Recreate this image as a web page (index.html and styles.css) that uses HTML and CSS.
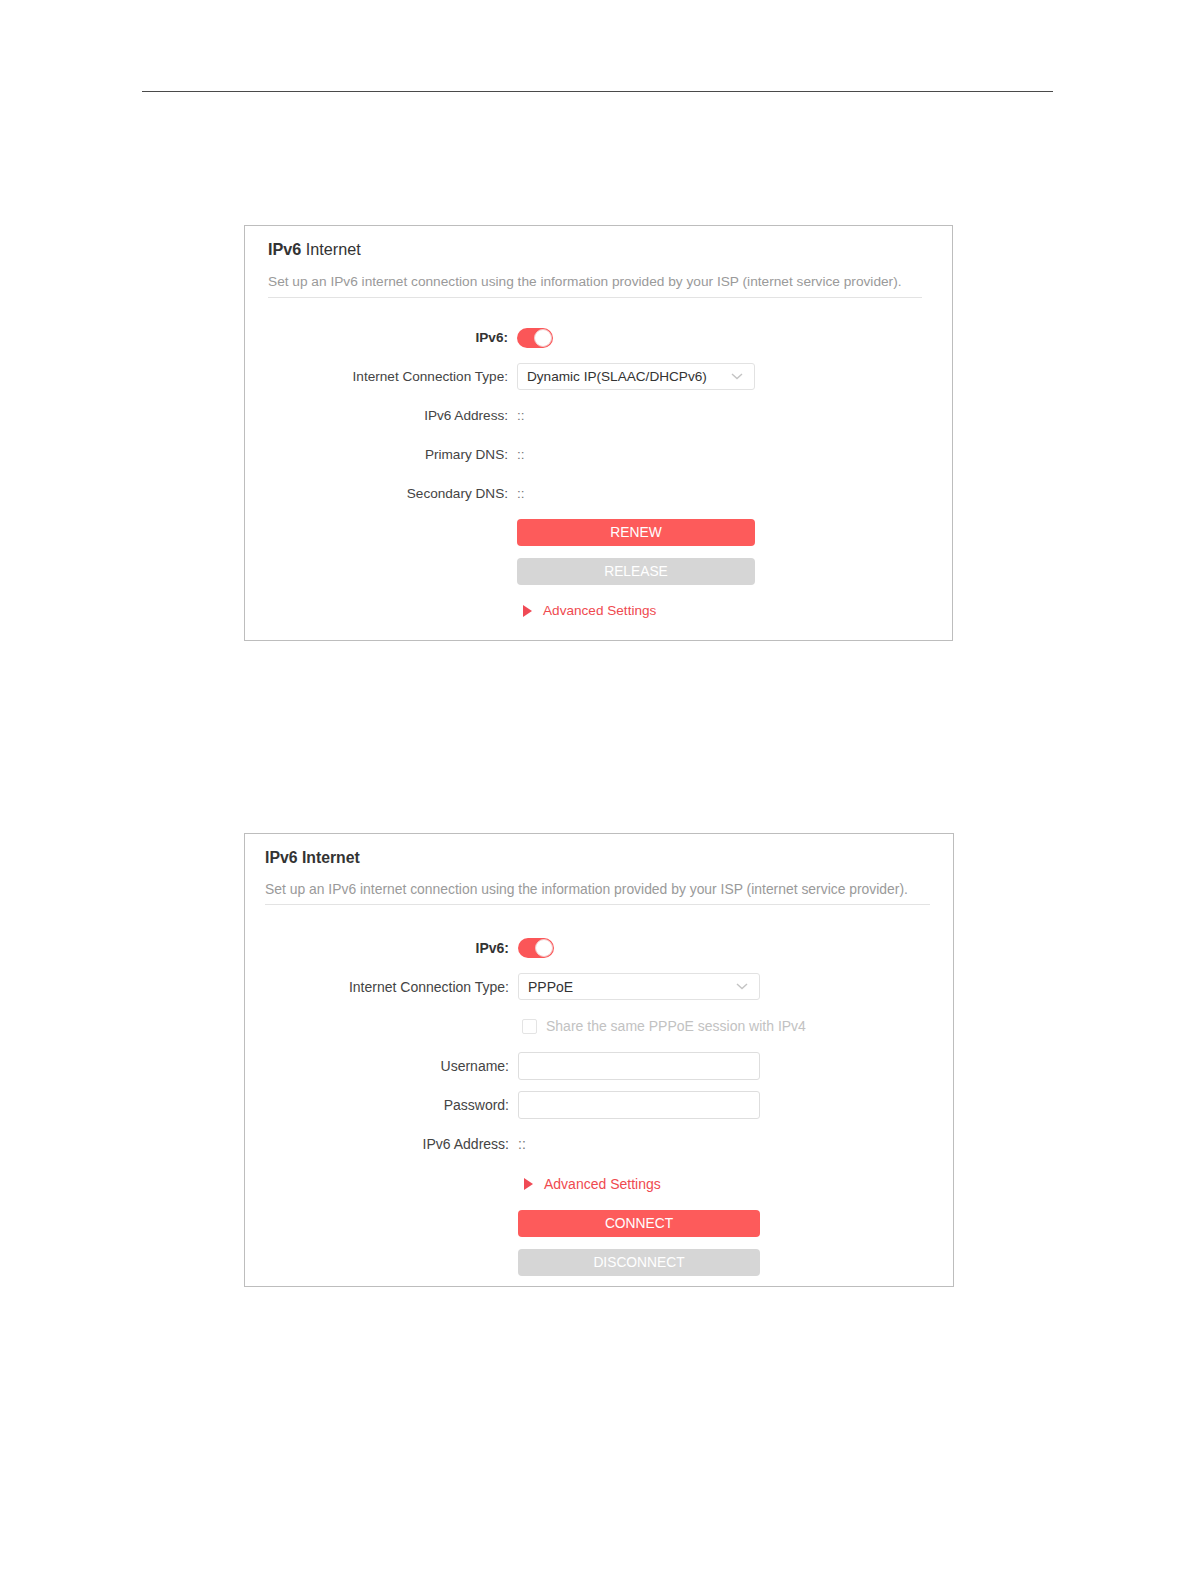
FILE: index.html
```html
<!DOCTYPE html>
<html lang="en">
  <head>
    <meta charset="UTF-8" />
    <meta name="viewport" content="width=device-width, initial-scale=1.0" />
    <title>IPv6 Internet</title>
    <link rel="stylesheet" href="styles.css">
  </head>
  <body>
    <div class="page">
      <div class="rule"></div>

      <!-- Dynamic IP panel -->
      <section class="panel panel-dynamic">
        <h2 class="panel-title"><b>IPv6</b> Internet</h2>
        <p class="panel-desc">Set up an IPv6 internet connection using the information provided by your ISP (internet service provider).</p>
        <div class="form">
          <span class="label label-strong">IPv6:</span>
          <span class="toggle"><span class="knob"></span></span>

          <span class="label">Internet Connection Type:</span>
          <div class="select">
            <span>Dynamic IP(SLAAC/DHCPv6)</span>
            <svg class="chevron" width="12" height="7" viewBox="0 0 12 7"><path d="M1 1l5 4.5L11 1" fill="none" stroke="#c4c4c4" stroke-width="1.4"/></svg>
          </div>

          <span class="label">IPv6 Address:</span>
          <span class="value">::</span>

          <span class="label">Primary DNS:</span>
          <span class="value">::</span>

          <span class="label">Secondary DNS:</span>
          <span class="value">::</span>

          <button class="btn btn-primary span2">RENEW</button>
          <button class="btn btn-disabled span2">RELEASE</button>

          <a class="advanced span2" href="#"><span class="arrow"></span>Advanced Settings</a>
        </div>
      </section>

      <!-- PPPoE panel -->
      <section class="panel panel-pppoe">
        <h2 class="panel-title">IPv6 Internet</h2>
        <p class="panel-desc">Set up an IPv6 internet connection using the information provided by your ISP (internet service provider).</p>
        <div class="form">
          <span class="label label-strong">IPv6:</span>
          <span class="toggle"><span class="knob"></span></span>

          <span class="label">Internet Connection Type:</span>
          <div class="select">
            <span>PPPoE</span>
            <svg class="chevron" width="12" height="7" viewBox="0 0 12 7"><path d="M1 1l5 4.5L11 1" fill="none" stroke="#c4c4c4" stroke-width="1.4"/></svg>
          </div>

          <label class="check span2"><span class="box"></span>Share the same PPPoE session with IPv4</label>

          <span class="label">Username:</span>
          <input class="input" type="text" />

          <span class="label">Password:</span>
          <input class="input" type="password" />

          <span class="label">IPv6 Address:</span>
          <span class="value">::</span>

          <a class="advanced span2" href="#"><span class="arrow"></span>Advanced Settings</a>

          <button class="btn btn-primary span2">CONNECT</button>
          <button class="btn btn-disabled span2">DISCONNECT</button>
        </div>
      </section>
    </div>
  </body>
</html>
```

FILE: styles.css
```css
body {
  margin: 0;
  background: #fff;
  font-family: "Liberation Sans", Arial, sans-serif;
  color: #333;
}
.page {
  width: 911px;
  padding: 91px 0 200px 142px;
}
.rule {
  border-top: 1px solid #4a4a4a;
}

/* Settings panel */
.panel {
  margin-left: 102px;
  border: 1px solid #bdbdbd;
  box-sizing: border-box;
}
.panel-dynamic {
  width: 709px;
  margin-top: 133px;
  padding: 14px 30px 16px 23px;
}
.panel-pppoe {
  width: 710px;
  margin-top: 192px;
  padding: 15px 23px 10px 20px;
}
.panel-title {
  margin: 0;
  font-size: 15.8px;
  line-height: 18px;
  font-weight: bold;
  color: #333;
}
.panel-dynamic .panel-title {
  font-weight: normal;
  font-size: 16.2px;
}
.panel-desc {
  margin: 15px 0 0;
  padding-bottom: 6px;
  border-bottom: 1px solid #e3e3e3;
  font-size: 13.7px;
  line-height: 18px;
  color: #9a9a9a;
}
.panel-pppoe .panel-desc {
  margin-top: 13px;
  font-size: 13.9px;
}

/* Form grid: labels on the left, controls on the right */
.form {
  display: grid;
  grid-template-columns: 240px 238px;
  grid-auto-rows: 27px;
  column-gap: 9px;
  row-gap: 12px;
  align-items: center;
  margin-top: 26px;
  font-size: 13.6px;
}
.panel-pppoe .form {
  grid-template-columns: 244px 242px;
  row-gap: 12.4px;
  margin-top: 29px;
  font-size: 14px;
}
.span2 {
  grid-column: 2;
}
.label {
  text-align: right;
  color: #444;
}
.label-strong {
  font-weight: bold;
  color: #333;
}
.value {
  color: #777;
}

.toggle {
  position: relative;
  width: 36px;
  height: 20px;
  border-radius: 10px;
  background: #fb5658;
}
.knob {
  position: absolute;
  right: 1px;
  top: 1px;
  width: 16px;
  height: 16px;
  border-radius: 50%;
  background: #fff;
  border: 1px solid #f3c8c8;
}

.select {
  display: flex;
  align-items: center;
  justify-content: space-between;
  height: 27px;
  box-sizing: border-box;
  padding: 0 11px 0 9px;
  border: 1px solid #e2e2e2;
  border-radius: 3px;
  color: #333;
}

.input {
  height: 28px;
  box-sizing: border-box;
  border: 1px solid #dedede;
  border-radius: 3px;
  margin: 0;
  font: inherit;
}

.check {
  display: flex;
  align-items: center;
  gap: 9px;
  margin-left: 4px;
  color: #c2c2c2;
  white-space: nowrap;
}
.check .box {
  flex-shrink: 0;
  width: 15px;
  height: 15px;
  box-sizing: border-box;
  border: 1px solid #e4e4e4;
  border-radius: 2px;
}

.btn {
  height: 27px;
  border: none;
  border-radius: 4px;
  font-family: inherit;
  font-size: 13.8px;
  color: #fff;
  padding: 0;
}
.btn-primary {
  background: #fd5b5b;
}
.btn-disabled {
  background: #d6d6d6;
}

.advanced {
  display: flex;
  align-items: center;
  gap: 11px;
  margin-left: 6px;
  color: #ef4a4f;
  text-decoration: none;
}
.arrow {
  width: 0;
  height: 0;
  border-top: 6px solid transparent;
  border-bottom: 6px solid transparent;
  border-left: 9px solid #f04a55;
}
```
